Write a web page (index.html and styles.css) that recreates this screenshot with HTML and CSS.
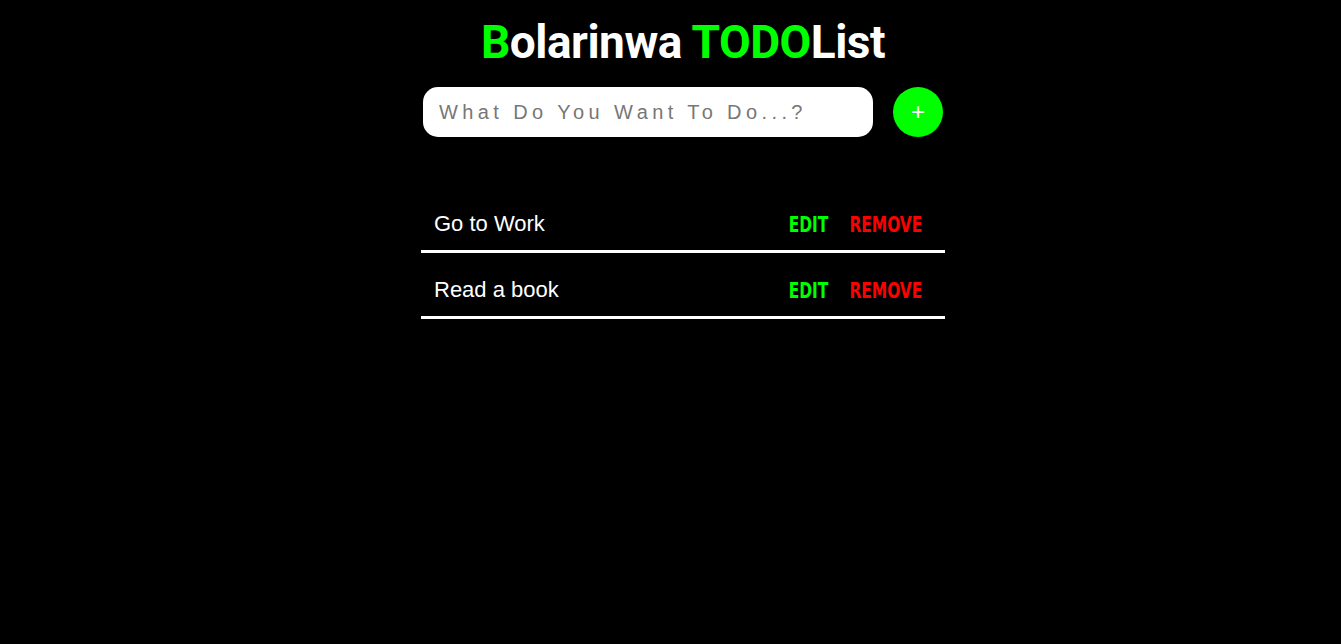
FILE: index.html
```html
<!DOCTYPE html>
<html>
<head>
<meta charset="utf-8">
<link rel="stylesheet" href="styles.css">
</head>
<body>
<div class="app">
  <h1 class="title"><span class="green">B</span>olarinwa <span class="green">TODO</span>List</h1>
  <form class="add-form">
    <input class="add-input" type="text" placeholder="What Do You Want To Do...?">
    <button class="add-btn" type="button">+</button>
  </form>
  <ul class="list">
    <li class="item">
      <span class="item-text">Go to Work</span>
      <span class="actions"><span class="edit">EDIT</span><span class="remove">REMOVE</span></span>
    </li>
    <li class="item">
      <span class="item-text">Read a book</span>
      <span class="actions"><span class="edit">EDIT</span><span class="remove">REMOVE</span></span>
    </li>
  </ul>
</div>
</body>
</html>
```
FILE: styles.css
```css
html, body {
  margin: 0;
  background: #000;
  height: 100%;
}
body {
  padding-left: 25px;
  box-sizing: border-box;
}
.app {
  width: 524px;
  margin: 0 auto;
  display: flex;
  flex-direction: column;
  align-items: center;
}
.title {
  margin: 14px 0 0 0;
  font-family: "Roboto", sans-serif;
  font-weight: 700;
  font-size: 46px;
  line-height: 56px;
  color: #fff;
  letter-spacing: -0.5px;
}
.green { color: #00ff00; }
.add-form {
  margin-top: 17px;
  display: flex;
  gap: 20px;
  align-items: center;
}
.add-input {
  width: 450px;
  height: 50px;
  box-sizing: border-box;
  border: none;
  border-radius: 15px;
  padding: 0 16px;
  font-family: "Liberation Sans", Arial, sans-serif;
  font-size: 20px;
  letter-spacing: 4.4px;
  background: #fff;
  outline: none;
}
.add-input::placeholder { color: #777; }
.add-btn {
  width: 50px;
  height: 50px;
  border-radius: 50%;
  border: none;
  background: #00ff00;
  color: #fff;
  font-family: "Liberation Sans", Arial, sans-serif;
  font-size: 24px;
  padding: 0;
}
.list {
  list-style: none;
  margin: 50px 0 0 0;
  padding: 0;
  width: 524px;
}
.item {
  display: flex;
  justify-content: space-between;
  align-items: center;
  height: 52px;
  padding: 11px 23px 0 13px;
  border-bottom: 3px solid #fff;
}
.item-text {
  font-family: "Liberation Sans", Arial, sans-serif;
  font-size: 22px;
  color: #fff;
}
.actions {
  display: flex;
  gap: 27px;
  font-family: "DejaVu Sans Condensed", sans-serif;
  font-weight: bold;
  font-size: 22px;
  transform: scaleX(0.78);
  transform-origin: right center;
}
.edit { color: #00ff00; }
.remove { color: #ff0000; }
```
